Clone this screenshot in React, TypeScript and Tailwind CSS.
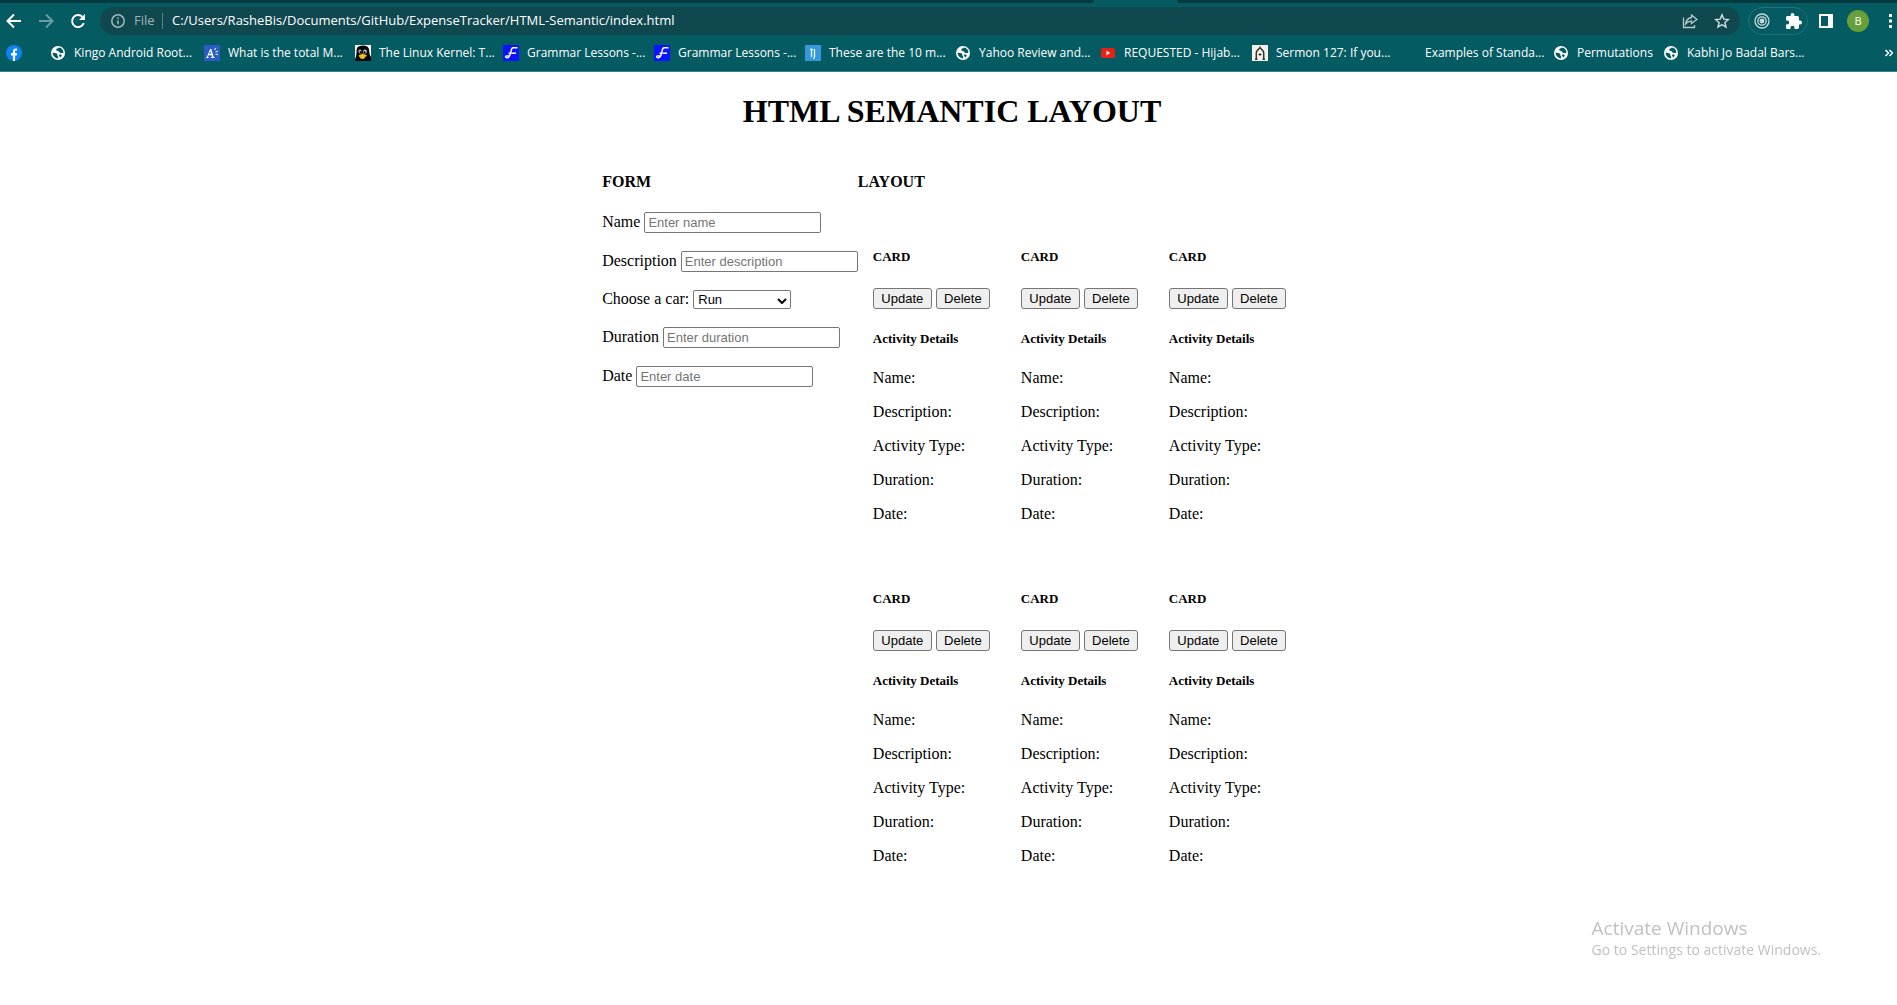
import React from 'react';

function Globe() {
  return (
    <svg viewBox="0 0 16 16" className="size-4 shrink-0">
      <circle cx="8" cy="8" r="7" fill="#fff" />
      <path d="M2.600 7.800c1.800.1 3.600 0 4.400 1s-.1 1.500.8 2.100c.7.5.4 1.500.1 2.500-2.900-.2-5.300-2.600-5.300-5.600z" fill="#045b62" />
      <path d="M8.800 2.600c-.4.9-2.300.9-2.600 1.900-.3.900.6 1.400 1.700 1.500 1.200.1 1.100 1.300 2 1.800 1 .5 1.900 0 3.500.2A5.400 5.400 0 0 0 8.800 2.600z" fill="#045b62" />
      <path d="M9 9.600c1 .1 2.400-.2 2.700.5.3.6-.8 2-1.500 2.300-.6-.7-1.500-1.800-1.200-2.800z" fill="#045b62" />
    </svg>
  );
}

function Facebook() {
  return (
    <svg viewBox="0 0 16 16" className="size-4 shrink-0">
      <circle cx="8" cy="8" r="8" fill="#0d84f2" />
      <path d="M6.900 16v-5.600H5V8.100h1.900V6.500c0-2 1.100-3 2.800-3 .6 0 1.300.1 1.300.1v1.900h-.9c-.8 0-1 .5-1 1v1.600h2l-.3 2.300H9.100V16z" fill="#fff" />
    </svg>
  );
}

function Spark() {
  return (
    <svg viewBox="0 0 16 16" className="size-4 shrink-0">
      <rect width="16" height="16" fill="#2a5cc4" />
      <path d="M2 12.500h2.500M7 12.500h3.500M3.200 12.500L6.700 4" stroke="#fff" strokeWidth="1" fill="none" />
      <path d="M6.500 4l2.500 8.500M4.500 9.500h3.300" stroke="#fff" strokeWidth="1.500" fill="none" />
      <path d="M10.500 5l1.300-2M11.500 7l2.500-.8M11.500 9l2.500.8" stroke="#dce8ff" strokeWidth="1.200" />
    </svg>
  );
}

function Penguin() {
  return (
    <svg viewBox="0 0 16 16" className="size-4 shrink-0">
      <rect width="16" height="16" fill="#fff" />
      <path d="M2 3C3 0 13-1 14 4c.5 3 0 5 2 8v4H0v-2c2-3 1-7 2-11z" fill="#080808" />
      <ellipse cx="5" cy="6.500" rx="1.500" ry="2" fill="#bbb" />
      <ellipse cx="10" cy="6.500" rx="1.800" ry="2" fill="#ccc" />
      <circle cx="5.500" cy="7" r=".9" fill="#000" />
      <circle cx="9.700" cy="7" r=".9" fill="#000" />
      <path d="M3.500 10.500L7.500 8.500l4.500 1.700-3.500 3.800-3-.5z" fill="#f5bd14" />
    </svg>
  );
}

function Grammar() {
  return (
    <svg viewBox="0 0 16 16" className="size-4 shrink-0">
      <rect width="16" height="16" fill="#0a14ff" />
      <path d="M14.500 2.800H10C8 3 8.300 6 7.300 9c-.6 2.500-2 3.800-3.500 3.800-1.300 0-1.600-1.200-.8-1.800.9-.5 2 .2 3.500 0M5.500 8.300c2-.8 4 .4 7.500-.3" stroke="#fff" strokeWidth="1.400" fill="none" />
    </svg>
  );
}

function Tj() {
  return (
    <svg viewBox="0 0 16 16" className="size-4 shrink-0">
      <rect width="16" height="16" fill="#3498db" />
      <path d="M5 4.500h3M6.500 4.500V12M9.500 4v8c0 1-.5 1.500-1.500 1.500" stroke="#e8f6ff" strokeWidth="1.300" fill="none" />
    </svg>
  );
}

function Youtube() {
  return (
    <svg viewBox="0 0 16 16" className="size-4 shrink-0">
      <rect x="1" y="3" width="14" height="10" rx="2" fill="#e62117" />
      <path d="M6.500 5.800v4.400L10.200 8z" fill="#fff" />
    </svg>
  );
}

function Arch() {
  return (
    <svg viewBox="0 0 16 16" className="size-4 shrink-0">
      <rect width="16" height="16" fill="#f4f2e8" />
      <path d="M3 14.300h2.500M10.500 14.300H13M4.300 14V8C4.300 5 7 4.500 8 2.500c1 2 3.700 2.500 3.700 5.500v6" stroke="#333" strokeWidth="1.500" fill="none" />
      <path d="M6.500 9.500h3M8 8v3" stroke="#333" strokeWidth="1" />
    </svg>
  );
}

function Blank() {
  return <span className="size-4 shrink-0" />;
}

const bookmarks = [
  { label: 'Kingo Android Root...', Icon: Globe, width: 'w-[154px]' },
  { label: 'What is the total M...', Icon: Spark, width: 'w-[151px]' },
  { label: 'The Linux Kernel: T...', Icon: Penguin, width: 'w-[148px]' },
  { label: 'Grammar Lessons -...', Icon: Grammar, width: 'w-[151px]' },
  { label: 'Grammar Lessons -...', Icon: Grammar, width: 'w-[151px]' },
  { label: 'These are the 10 m...', Icon: Tj, width: 'w-[150px]' },
  { label: 'Yahoo Review and...', Icon: Globe, width: 'w-[145px]' },
  { label: 'REQUESTED - Hijab...', Icon: Youtube, width: 'w-[152px]' },
  { label: 'Sermon 127: If you...', Icon: Arch, width: 'w-[149px]' },
  { label: 'Examples of Standa...', Icon: Blank, width: 'w-[152px]' },
  { label: 'Permutations', Icon: Globe, width: 'w-[110px]' },
  { label: 'Kabhi Jo Badal Bars...', Icon: Globe, width: 'w-[151px]' },
];

function BrowserChrome() {
  return (
    <header className="border-b border-[#3c8187] bg-[#045b62] font-['Open_Sans',sans-serif] text-white">
      <div className="flex h-[3px]">
        <div className="w-[1094px] rounded-br bg-[#033a40]" />
        <div className="w-[83px]" />
        <div className="grow rounded-bl bg-[#033a40]" />
      </div>
      <div className="flex h-9 items-center">
        <div className="flex w-[100px] items-center gap-4 pl-[6px]">
          <button aria-label="Back" className="size-4">
            <svg viewBox="0 0 16 16" fill="none" stroke="#fff" strokeWidth="2"><path d="M15 8H2.500M8 1.500L1.500 8 8 14.500" /></svg>
          </button>
          <button aria-label="Forward" className="size-4">
            <svg viewBox="0 0 16 16" fill="none" stroke="#6b9da1" strokeWidth="2"><path d="M1 8h12.500M8 1.500L14.500 8 8 14.500" /></svg>
          </button>
          <button aria-label="Reload" className="size-4">
            <svg viewBox="0 0 16 16" fill="none" stroke="#fff" strokeWidth="2"><path d="M13.800 10A6 6 0 1 1 12.500 4L13.500 5" /><path d="M15 1v6H9z" fill="#fff" stroke="none" /></svg>
          </button>
        </div>
        <div className="flex h-7 grow items-center rounded-full bg-[#0f484f] pr-[10px] pl-[11px]">
          <svg viewBox="0 0 14 14" className="size-[14px] shrink-0" fill="none" stroke="#a3b8ba" strokeWidth="1.500">
            <circle cx="7" cy="7" r="6.200" /><path d="M7 6.200v4M7 3.500V5" />
          </svg>
          <span className="w-[37px] pl-[9px] text-[13px] text-[#9fb4b6]">File</span>
          <span className="h-4 w-px bg-[#5b8286]" />
          <input aria-label="Address" readOnly defaultValue="C:/Users/RasheBis/Documents/GitHub/ExpenseTracker/HTML-Semantic/index.html" className="min-w-0 grow bg-transparent pl-[9px] text-[13px] outline-none" />
          <button aria-label="Share" className="mr-4 size-4">
            <svg viewBox="0 0 16 16" fill="none" stroke="#b7c8ca" strokeWidth="1.300"><path d="M1.500 4.500v10h11v-2.500" /><path d="M9.500 2l5.500 4.500-5.500 4V8.200C7 8.200 5 9 3.500 11c.5-4 3-6 6-6.500z" /></svg>
          </button>
          <button aria-label="Bookmark" className="size-4">
            <svg viewBox="0 0 16 16" fill="none" stroke="#d2dfe0" strokeWidth="1.400"><path d="M8 1.800l1.800 4.300 4.600.4-3.500 3 1.100 4.500L8 11.600 4 14l1.100-4.500-3.500-3 4.600-.4z" /></svg>
          </button>
        </div>
        <div className="ml-2 flex h-7 w-[60px] items-center gap-4 rounded-full border border-[#24707a] pl-[5px]">
          <button aria-label="Extension" className="size-4">
            <svg viewBox="0 0 16 16" fill="none" stroke="#c9d8d9" strokeWidth="1.300"><circle cx="8" cy="8" r="7" /><circle cx="8" cy="8" r="4.200" /><circle cx="8" cy="8" r="1.800" fill="#c9d8d9" /></svg>
          </button>
          <button aria-label="Extensions" className="size-4">
            <svg viewBox="2 1 21 21" fill="#fff"><path d="M20.500 11H19V7c0-1.100-.9-2-2-2h-4V3.500a2.500 2.500 0 0 0-5 0V5H4c-1.100 0-2 .9-2 2v3.800h1.500a2.700 2.700 0 0 1 0 5.400H2V20c0 1.100.9 2 2 2h3.800v-1.500a2.700 2.700 0 0 1 5.400 0V22H17c1.100 0 2-.9 2-2v-4h1.500a2.500 2.500 0 0 0 0-5z" /></svg>
          </button>
        </div>
        <button aria-label="Side panel" className="ml-[11px] size-[14px]">
          <svg viewBox="0 0 14 14"><path fillRule="evenodd" fill="#fff" d="M0 0h14v14H0zM2 2v10h7V2z" /></svg>
        </button>
        <button className="ml-[14px] size-[22px] rounded-full bg-[#689f38] text-[11px]">B</button>
        <button aria-label="Menu" className="ml-5 w-2">
          <svg viewBox="0 0 3 14" className="h-[14px] w-[3px]" fill="#fff"><path d="M0 0h3v3H0zM0 5.500h3v3H0zM0 11h3v3H0z" /></svg>
        </button>
      </div>
      <nav className="flex h-8 items-center pb-1 pl-[6px] text-xs">
        <a href="#facebook" aria-label="Facebook" className="w-11 shrink-0"><Facebook /></a>
        {bookmarks.map(({ label, Icon, width }, i) => (
          <a key={i} href="#bookmark" className={`flex shrink-0 items-center gap-2 whitespace-nowrap ${width}`}>
            <Icon />
            {label}
          </a>
        ))}
        <button aria-label="More bookmarks" className="mr-1 ml-auto size-2">
          <svg viewBox="0 0 8 8" fill="none" stroke="#fff" strokeWidth="1.500"><path d="M.500 1l3 3-3 3M4.500 1l3 3-3 3" /></svg>
        </button>
      </nav>
    </header>
  );
}

const controlText = "font-['Liberation_Sans',Arial,sans-serif] text-[13px]";

function TextField({ label }: { label: string }) {
  const id = label.toLowerCase();
  return (
    <div className="flex h-[23px] items-baseline gap-1">
      <label htmlFor={id}>{label}</label>
      <input
        id={id}
        type="text"
        placeholder={`Enter ${id}`}
        className={`h-[21px] w-[177px] rounded-xs border border-[#767676] px-[3px] placeholder:text-[#757575] ${controlText}`}
      />
    </div>
  );
}

function ActivityForm() {
  return (
    <form>
      <h4 className="mb-[21px] leading-[18px] font-bold">FORM</h4>
      <div className="flex flex-col gap-4">
        <TextField label="Name" />
        <TextField label="Description" />
        <div className="flex h-[21px] items-baseline gap-1">
          <label htmlFor="activity">Choose a car:</label>
          <span className="relative">
            <select id="activity" className={`h-[19px] w-[98px] appearance-none rounded-xs border border-[#767676] bg-white pl-1 ${controlText}`}>
              <option>Run</option>
            </select>
            <svg viewBox="0 0 10 6" className="pointer-events-none absolute top-2 right-1 h-[6px] w-[10px]" fill="none" stroke="#000" strokeWidth="2">
              <path d="M1 1l4 4 4-4" />
            </svg>
          </span>
        </div>
        <TextField label="Duration" />
        <TextField label="Date" />
      </div>
    </form>
  );
}

const buttonStyle = `h-[21px] rounded-[3px] border border-[#767676] bg-[#efefef] ${controlText}`;

function Card() {
  return (
    <article className="px-[15px] pt-[37px] pb-[31px]">
      <h5 className="text-[13px] leading-[15px] font-bold">CARD</h5>
      <div className="mt-[22px] flex h-[23px] items-end gap-1">
        <button className={`w-[59px] ${buttonStyle}`}>Update</button>
        <button className={`w-[54px] ${buttonStyle}`}>Delete</button>
      </div>
      <h5 className="mt-[22px] text-[13px] leading-[15px] font-bold">Activity Details</h5>
      <div className="mt-[23px] flex flex-col gap-4">
        <p>Name:</p>
        <p>Description:</p>
        <p>Activity Type:</p>
        <p>Duration:</p>
        <p>Date:</p>
      </div>
    </article>
  );
}

export default function App() {
  return (
    <div className="min-h-screen bg-white text-black">
      <BrowserChrome />
      <main className="pt-[21px] pl-[7px] font-['Liberation_Serif','Times_New_Roman',serif] text-base leading-[18px]">
        <h1 className="text-center text-[32px] leading-[37px] font-bold">HTML SEMANTIC LAYOUT</h1>
        <div className="mt-[43px] flex justify-center">
          <ActivityForm />
          <section>
            <h4 className="mb-[21px] leading-[18px] font-bold">LAYOUT</h4>
            <div className="grid grid-cols-[148px_148px_148px]">
              {Array.from({ length: 6 }, (_, i) => (
                <Card key={i} />
              ))}
            </div>
          </section>
        </div>
      </main>
      <aside className="fixed right-[76px] bottom-[45px] font-['Open_Sans',sans-serif] text-[#c1c1c1]">
        <p className="text-[19px] leading-6">Activate Windows</p>
        <p className="text-sm leading-5">Go to Settings to activate Windows.</p>
      </aside>
    </div>
  );
}
